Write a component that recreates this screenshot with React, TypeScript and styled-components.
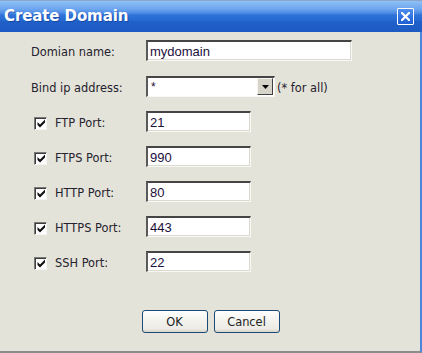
import React, { FC } from 'react';
import styled, { createGlobalStyle } from 'styled-components';

const GlobalStyle = createGlobalStyle`
  html, body {
    margin: 0;
    padding: 0;
    background: #e4e3d9;
  }
  * {
    box-sizing: border-box;
  }
`;

interface PortRow {
  label: string;
  value: string;
}

const ports: PortRow[] = [
  { label: 'FTP Port:', value: '21' },
  { label: 'FTPS Port:', value: '990' },
  { label: 'HTTP Port:', value: '80' },
  { label: 'HTTPS Port:', value: '443' },
  { label: 'SSH Port:', value: '22' },
];

const CheckMark: FC = () => (
  <svg width="9" height="9" viewBox="0 0 9 9">
    <path d="M0.5 3 L3 5.5 L8 0.5 L8 3.5 L3 8.5 L0.5 6 Z" fill="#111" />
  </svg>
);

const CloseIcon: FC = () => (
  <svg width="9" height="9" viewBox="0 0 9 9">
    <path d="M1 1 L8 8 M8 1 L1 8" stroke="#fff" strokeWidth="2.2" strokeLinecap="square" />
  </svg>
);

const App: FC<{}> = () => {
  return (
    <>
      <GlobalStyle />
      <Window>
        <TitleBar>
          <Title>Create Domain</Title>
          <CloseButton>
            <CloseIcon />
          </CloseButton>
        </TitleBar>
        <Body>
          <Form>
            <Row>
              <Label>Domian name:</Label>
              <TextBox wide value="mydomain" readOnly />
            </Row>
            <Row>
              <Label>Bind ip address:</Label>
              <Select>
                <SelectValue>*</SelectValue>
                <DropButton>
                  <svg width="7" height="4" viewBox="0 0 7 4">
                    <path d="M0 0 H7 L3.5 4 Z" fill="#000" />
                  </svg>
                </DropButton>
              </Select>
              <Hint>(* for all)</Hint>
            </Row>
            {ports.map(port => (
              <Row key={port.label}>
                <Label>
                  <CheckBox>
                    <CheckMark />
                  </CheckBox>
                  {port.label}
                </Label>
                <TextBox value={port.value} readOnly />
              </Row>
            ))}
          </Form>
          <Buttons>
            <Button>OK</Button>
            <Button>Cancel</Button>
          </Buttons>
        </Body>
      </Window>
    </>
  );
};

const Window = styled.div`
  width: 422px;
  height: 353px;
  display: flex;
  flex-direction: column;
  font-family: 'DejaVu Sans', Verdana, sans-serif;
  font-size: 11.4px;
  color: #24222e;
`;

const TitleBar = styled.div`
  height: 32px;
  flex: none;
  display: flex;
  align-items: center;
  justify-content: space-between;
  padding: 0 8px 0 4px;
  border-top: 1px solid #8aa6cc;
  background: linear-gradient(
    to bottom,
    #8ec0f5 0px,
    #6ea6ee 8px,
    #4d8ce6 12px,
    #2f73d8 14px,
    #256ad2 19px,
    #1f5fc8 21px,
    #1d5bc2 31px
  );
`;

const Title = styled.div`
  font-family: 'DejaVu Sans', Verdana, sans-serif;
  font-weight: bold;
  font-size: 15px;
  color: #fff;
  letter-spacing: -0.1px;
  text-shadow: 1px 1px 0 rgba(10, 40, 120, 0.45);
  margin-top: -1px;
`;

const CloseButton = styled.div`
  width: 17px;
  height: 17px;
  border: 1px solid #fff;
  border-radius: 1px;
  background: linear-gradient(to bottom, #4d8ef0, #2b6fe0 60%, #1f5fd2);
  display: flex;
  align-items: center;
  justify-content: center;
  margin-top: -1px;
`;

const Body = styled.div`
  flex: 1;
  display: flex;
  flex-direction: column;
  background: #e4e3d9;
  border-right: 2px solid #4a86dc;
  border-bottom: 2px solid #8c8c88;
`;

const Form = styled.div`
  display: flex;
  flex-direction: column;
  gap: 14px;
  padding: 8px 0 0 31px;
`;

const Row = styled.div`
  display: flex;
  align-items: center;
  height: 21px;

  &:first-child {
    margin-bottom: 1px;
  }
`;

const Label = styled.div`
  width: 115px;
  flex: none;
  display: flex;
  align-items: center;
  padding-top: 3px;
`;

const CheckBox = styled.span`
  width: 13px;
  height: 13px;
  margin: 0 8px 0 3px;
  background: #fff;
  border-top: 1px solid #7a7a7a;
  border-left: 1px solid #7a7a7a;
  border-right: 1px solid #f4f4f0;
  border-bottom: 1px solid #f4f4f0;
  box-shadow: inset 1px 1px 0 #3c3c3c;
  display: flex;
  align-items: center;
  justify-content: center;
  padding: 1px 0 0 1px;
`;

const TextBox = styled.input<{ wide?: boolean }>`
  width: ${p => (p.wide ? 206 : 105)}px;
  height: 21px;
  margin: 0;
  padding: 1px 2px 0;
  font-family: 'Liberation Sans', Arial, sans-serif;
  font-size: 13px;
  color: #1c0f3c;
  background: #fff;
  border-style: solid;
  border-width: 2px 1px 1px 2px;
  border-color: #454545 #f8f8f4 #f8f8f4 #5a5a5a;
  box-shadow: inset -1px -1px 0 #dcdad0;
  outline: none;
`;

const Select = styled.div`
  width: 129px;
  height: 21px;
  display: flex;
  align-items: stretch;
  background: #fff;
  border-style: solid;
  border-width: 2px 1px 1px 2px;
  border-color: #454545 #f8f8f4 #f8f8f4 #5a5a5a;
`;

const SelectValue = styled.div`
  flex: 1;
  padding: 2px 0 0 3px;
  font-family: 'Liberation Sans', Arial, sans-serif;
  font-size: 12px;
  color: #1c0f3c;
`;

const DropButton = styled.div`
  width: 16px;
  margin: 0 1px 1px 0;
  background: #d6d3cb;
  border-style: solid;
  border-width: 1px;
  border-color: #f6f5f0 #404040 #404040 #f6f5f0;
  display: flex;
  align-items: center;
  justify-content: center;
`;

const Hint = styled.div`
  margin-left: 2px;
  padding-top: 3px;
`;

const Buttons = styled.div`
  display: flex;
  justify-content: center;
  gap: 6px;
  margin-top: 38px;
  padding-left: 1px;
`;

const Button = styled.div`
  width: 66px;
  height: 23px;
  display: flex;
  align-items: center;
  justify-content: center;
  border: 1px solid #1c4a78;
  border-radius: 3px;
  background: linear-gradient(to bottom, #ffffff 0%, #f4f4f0 40%, #ecebe4 85%, #d8d4c8 100%);
  font-size: 11.4px;
  color: #222;
  padding-top: 1px;
`;

export default App;
